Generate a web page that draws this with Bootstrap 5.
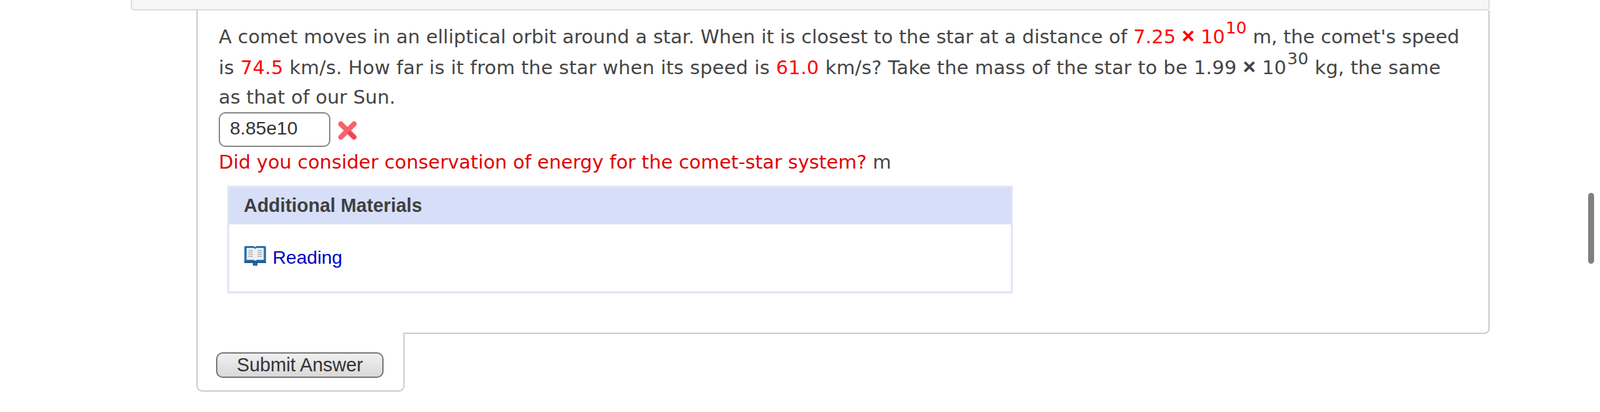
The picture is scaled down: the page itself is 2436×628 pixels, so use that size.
<!doctype html>
<html lang="en">
<head>
<meta charset="utf-8">
<title>Question</title>
<link href="https://cdn.jsdelivr.net/npm/bootstrap@5.3.0/dist/css/bootstrap.min.css" rel="stylesheet">
<style>
html,body{height:100%;overflow:hidden;background:#fff}
body{font-family:"Liberation Sans",Arial,sans-serif;color:#333}
.page-wrap{margin-left:199px;width:2069px}
.top-panel{height:16px;background:#f6f6f6;border:2px solid #ddd;border-top:0;border-radius:0 0 5px 5px}
.q-box{margin-left:100px;border-left:2px solid #ccc;border-right:2px solid #ccc;border-bottom:2px solid #ccc;border-bottom-right-radius:8px;height:493px;padding:0 0 0 32px;position:relative}
.q-text{font-family:"DejaVu Sans",Verdana,sans-serif;font-size:28.95px;letter-spacing:.03px;color:#444;line-height:45px;padding-top:16px;margin:0;white-space:nowrap}
.q-text sup{font-size:.87em;position:static;vertical-align:15px;line-height:22px;margin-left:1px}
.line-two{letter-spacing:.23px}
.val{color:#f00}
.times{font-weight:700;font-family:"Liberation Sans",Arial,sans-serif;font-size:1.16em;line-height:0}
.ans-row{height:53px}
.ans-input{width:170px;height:53px;border:2px solid #888;border-radius:10px;padding:0 15px 4px;font:28.5px "Liberation Sans",Arial,sans-serif;color:#333;background:#fff;outline:0}
.x-mark{width:30px;height:30px;margin-left:11px;margin-top:13px}
.hint{font-family:"DejaVu Sans",Verdana,sans-serif;font-size:28.9px;color:#444;line-height:44px;margin:1px 0 0}
.hint b{font-weight:400;color:#e00000}
.mat-panel{margin:14px 0 0 13px;width:1196px;height:164px;border:3px solid #dfe5f9;background:#fff}
.mat-head{background:#d6dff7;height:56px;padding-left:22px;font-size:28.6px;font-weight:700;line-height:54px;color:#3f3f3f}
.mat-body{padding:0 0 0 22px;height:100px;font-size:28.5px}
.book-icon{margin-top:-6px}
.mat-body a{color:#0000c8;text-decoration:none;margin-left:9px}
.sub-tab{margin-left:100px;width:317px;height:90px;margin-top:-2px;border:2px solid #ccc;border-top:0;border-radius:0 0 9px 9px;background:#fff;position:relative;padding:30px 0 0 28px}
.tab-cover{position:absolute;left:0;top:-2px;width:313px;height:2px;background:#fff}
.sub-btn{width:255px;height:39px;border:2px solid #777;border-radius:10px;background:linear-gradient(#f0f0f0,#d9d9d9);font:28.8px/33px "Liberation Sans",Arial,sans-serif;color:#333;padding:0}
.fake-scroll{position:fixed;left:2418px;top:294px;width:9px;height:108px;background:#808080;border-radius:5px}
</style>
</head>
<body>
<div class="page-wrap">
  <div class="top-panel"></div>
  <div class="q-box">
    <p class="q-text">A comet moves in an elliptical orbit around a star. When it is closest to the star at a distance of <span class="val">7.25 <span class="times">×</span> 10<sup>10</sup></span> m, the comet's speed<br><span class="line-two">is <span class="val">74.5</span> km/s. How far is it from the star when its speed is <span class="val">61.0</span> km/s? Take the mass of the star to be 1.99 <span class="times">×</span> 10<sup>30</sup> kg, the same</span><br>as that of our Sun.</p>
    <div class="ans-row d-flex align-items-start">
      <input class="ans-input" type="text" value="8.85e10" aria-label="Answer">
      <svg class="x-mark" viewBox="0 0 30 30" aria-hidden="true"><path d="M5 5L25 25M25 5L5 25" stroke="#f8636b" stroke-width="8" stroke-linecap="round"/><path d="M19 19L25 25" stroke="#ee4450" stroke-width="6" stroke-linecap="round"/></svg>
    </div>
    <p class="hint"><b>Did you consider conservation of energy for the comet-star system?</b> m</p>
    <div class="mat-panel">
      <div class="mat-head">Additional Materials</div>
      <div class="mat-body d-flex align-items-center">
        <svg class="book-icon" width="35" height="31" viewBox="0 0 35 31" aria-hidden="true"><path d="M14 26h7v5h-7z" fill="#2a6496"/><path d="M1 2.500Q1 1 3 1h12l2.500 1.500L20 1h12q2 0 2 1.500V27H1z" fill="#2b72ab"/><path d="M4.500 4h11l2 1.500 2-1.500h11v18H20l-2.500 1.500L15 22H4.500z" fill="#eef1f3"/><path d="M7 8h7M7 11h7M7 14h7M7 17h7M21 8h7M21 11h7M21 14h7M21 17h7" stroke="#bfc3c7" stroke-width="2"/><path d="M1 24h33v3H1z" fill="#1f5c8f"/></svg>
        <a href="#">Reading</a>
      </div>
    </div>
  </div>
  <div class="sub-tab">
    <span class="tab-cover"></span>
    <button class="sub-btn" type="button">Submit Answer</button>
  </div>
</div>
<div class="fake-scroll"></div>
<script src="https://cdn.jsdelivr.net/npm/bootstrap@5.3.0/dist/js/bootstrap.bundle.min.js"></script>
</body>
</html>
